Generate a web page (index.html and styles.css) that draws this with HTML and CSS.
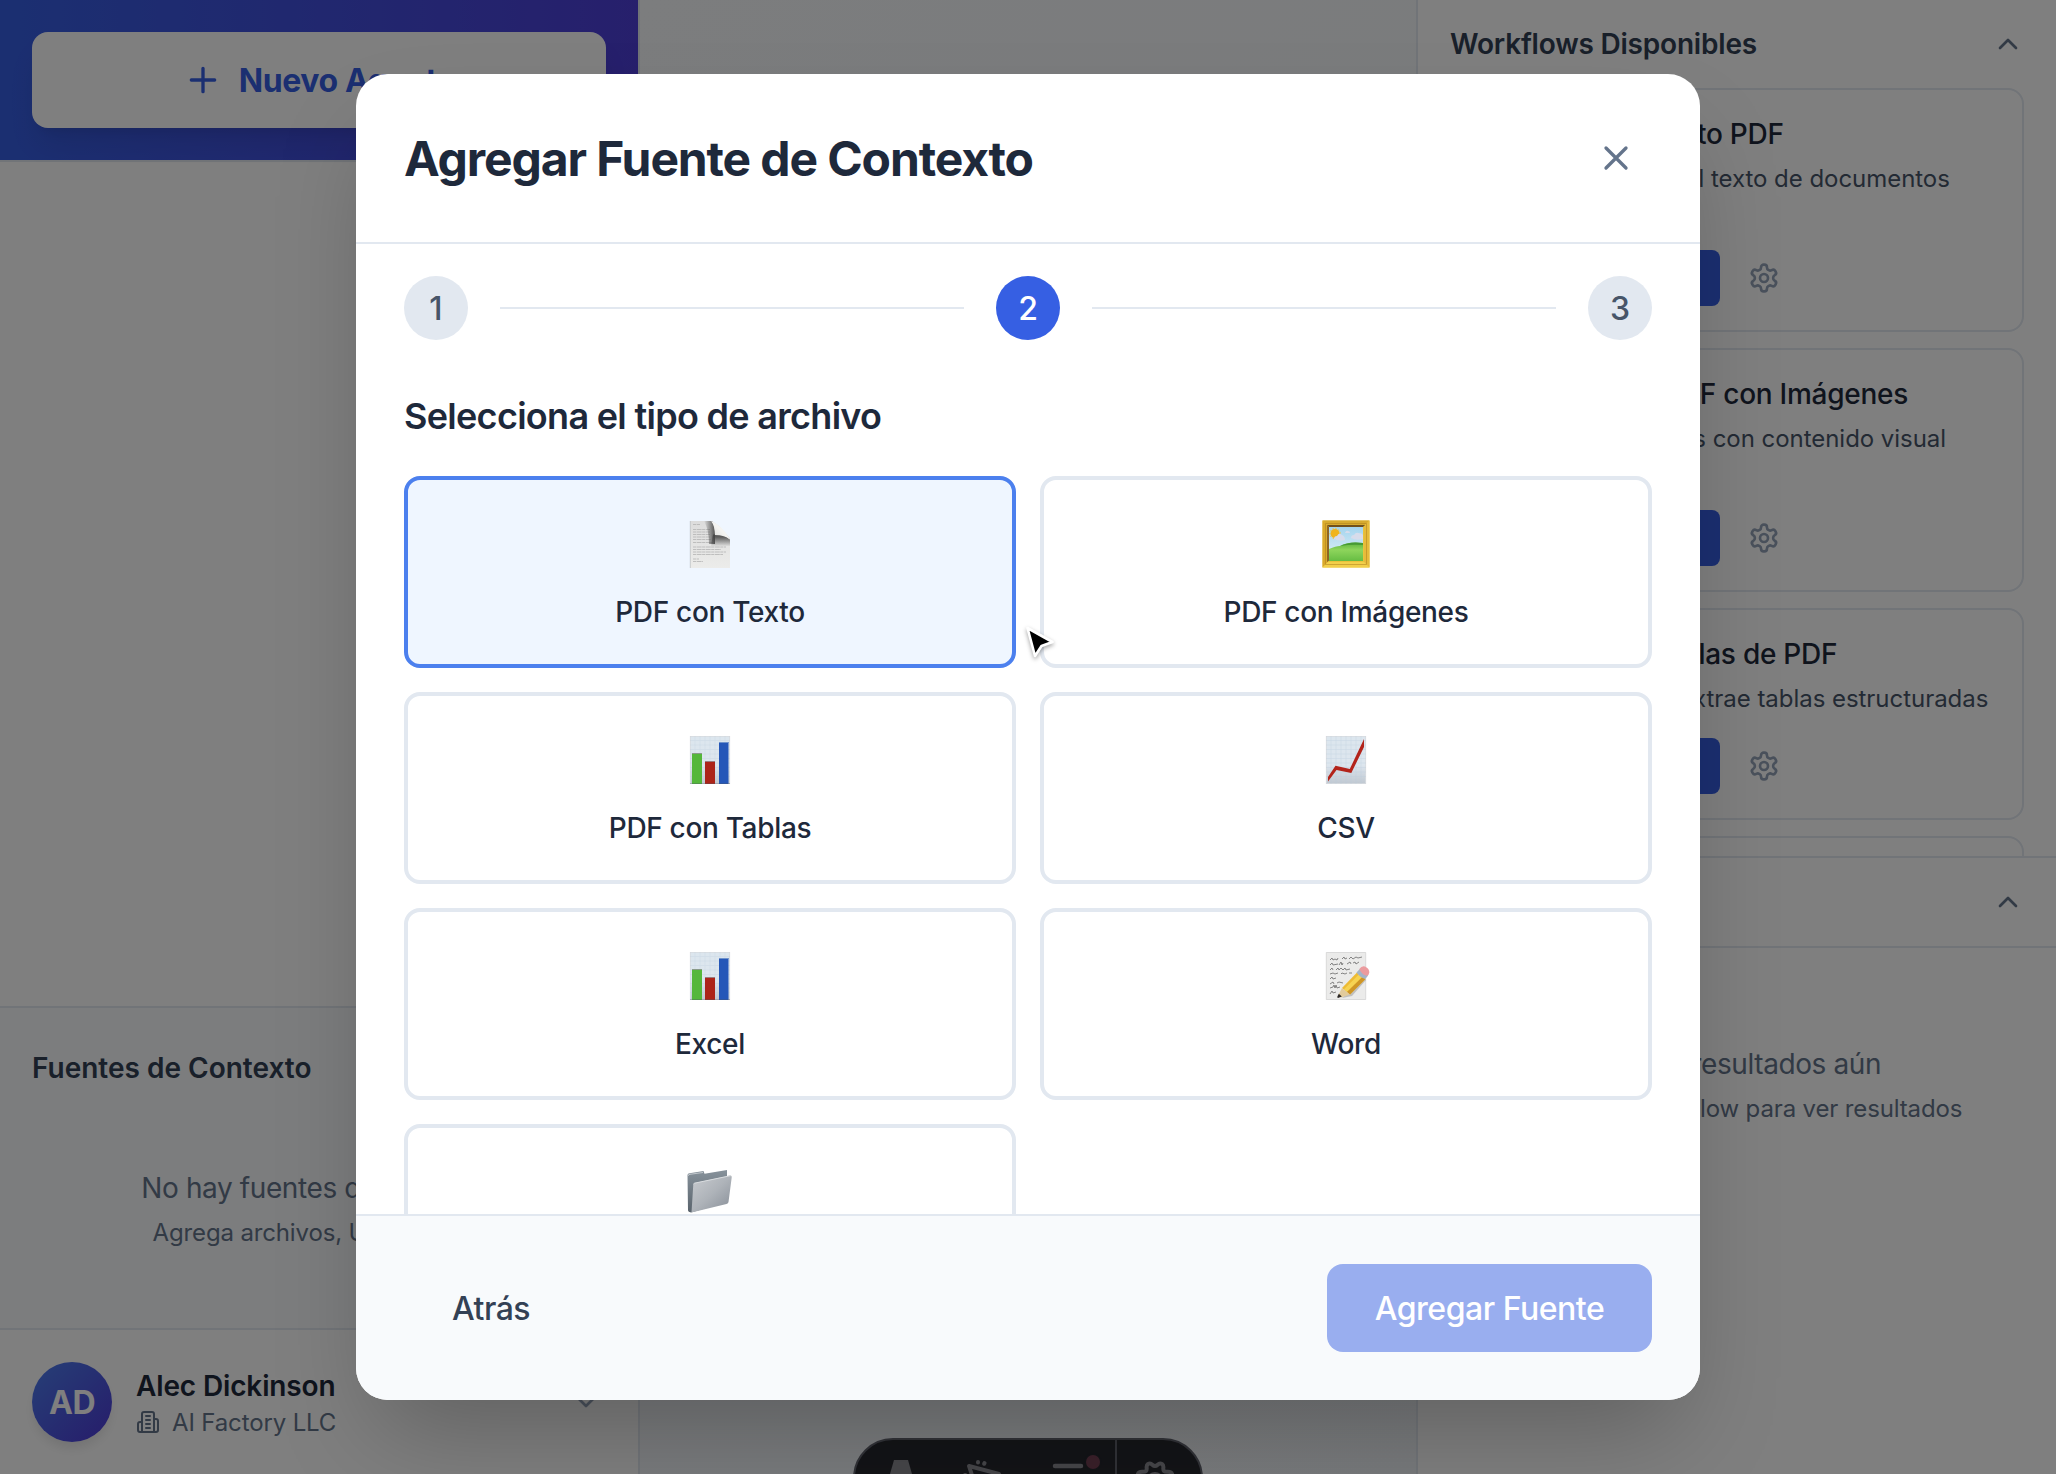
FILE: index.html
```html
<!DOCTYPE html>
<html lang="es">
<head>
<meta charset="utf-8">
<title>Agregar Fuente de Contexto</title>
<link rel="stylesheet" href="styles.css">
</head>
<body>
<svg class="defs" aria-hidden="true">
  <defs>
    <symbol id="i-gear" viewBox="0 0 24 24"><path d="M12.22 2h-.44a2 2 0 0 0-2 2v.18a2 2 0 0 1-1 1.73l-.43.25a2 2 0 0 1-2 0l-.15-.08a2 2 0 0 0-2.73.73l-.22.38a2 2 0 0 0 .73 2.73l.15.1a2 2 0 0 1 1 1.72v.51a2 2 0 0 1-1 1.74l-.15.09a2 2 0 0 0-.73 2.73l.22.38a2 2 0 0 0 2.73.73l.15-.08a2 2 0 0 1 2 0l.43.25a2 2 0 0 1 1 1.73V20a2 2 0 0 0 2 2h.44a2 2 0 0 0 2-2v-.18a2 2 0 0 1 1-1.73l.43-.25a2 2 0 0 1 2 0l.15.08a2 2 0 0 0 2.73-.73l.22-.39a2 2 0 0 0-.73-2.73l-.15-.08a2 2 0 0 1-1-1.74v-.5a2 2 0 0 1 1-1.74l.15-.09a2 2 0 0 0 .73-2.73l-.22-.38a2 2 0 0 0-2.73-.73l-.15.08a2 2 0 0 1-2 0l-.43-.25a2 2 0 0 1-1-1.73V4a2 2 0 0 0-2-2z"/><circle cx="12" cy="12" r="3"/></symbol>
    <symbol id="i-up" viewBox="0 0 24 24"><path d="m18 15-6-6-6 6"/></symbol>
    <symbol id="i-chart" viewBox="0 0 48 48">
      <rect x="4.300" y=".3" width="39.400" height="47.400" fill="url(#sheet)" stroke="#d3d7dc" stroke-width=".8"/>
      <path d="M4 4.500h40M4 9h40M4 13.500h40M4 18h40M4 22.500h40M4 27h40M4 31.500h40M4 36h40M4 40.500h40M9 0v48M14 0v48M19 0v48M24 0v48M29 0v48M34 0v48M39 0v48" stroke="#b9cbdc" stroke-width=".6" opacity=".4"/>
      <rect x="6" y="17" width="10" height="31" fill="#55b73b"/><rect x="6" y="17" width="10" height="1" fill="#8a9a88"/>
      <rect x="19" y="25" width="10" height="23" fill="#ac2419"/><rect x="19" y="25" width="10" height="1" fill="#9a7c80"/>
      <rect x="33" y="6" width="9.500" height="42" fill="#2557b8"/><rect x="33" y="6" width="9.500" height="1" fill="#6f93cc"/>
      <rect x="4" y="47" width="40" height="1" fill="#4b5563" opacity=".35"/>
    </symbol>
    <linearGradient id="sheet" x1="0" y1="0" x2="0" y2="1"><stop offset="0" stop-color="#dce6ee"/><stop offset=".6" stop-color="#dde6ee"/><stop offset="1" stop-color="#c0c8d1"/></linearGradient>
    <linearGradient id="shade-x" x1="0" y1="0" x2="1" y2="0"><stop offset="0" stop-color="#444" stop-opacity="0"/><stop offset="1" stop-color="#444" stop-opacity=".9"/></linearGradient>
    <linearGradient id="shade-y" x1="0" y1="1" x2="0" y2="0"><stop offset="0" stop-color="#444" stop-opacity="0"/><stop offset=".8" stop-color="#444" stop-opacity=".85"/></linearGradient>
    <linearGradient id="paper" x1="0" y1="0" x2="0" y2="1"><stop offset="0" stop-color="#dcdcdc"/><stop offset="1" stop-color="#ececea"/></linearGradient>
    <linearGradient id="fold" x1="0" y1="1" x2="1" y2="0"><stop offset=".1" stop-color="#dcdcda"/><stop offset=".5" stop-color="#f4f4f2"/></linearGradient>
    <linearGradient id="sky" x1="0" y1="0" x2="0" y2="1"><stop offset="0" stop-color="#a4d4ee"/><stop offset="1" stop-color="#e4f3f8"/></linearGradient>
    <linearGradient id="grass" x1="0" y1="0" x2="0" y2="1"><stop offset="0" stop-color="#58b13c"/><stop offset=".4" stop-color="#8ed55c"/><stop offset="1" stop-color="#66bd43"/></linearGradient>
    <linearGradient id="folder" x1="0" y1="0" x2="1" y2="1"><stop offset="0" stop-color="#c9ccd0"/><stop offset=".5" stop-color="#aeb3b9"/><stop offset="1" stop-color="#868d96"/></linearGradient>
    <linearGradient id="folderback" x1="0" y1="0" x2="0" y2="1"><stop offset="0" stop-color="#87929b"/><stop offset="1" stop-color="#59636c"/></linearGradient>
  </defs>
</svg>

<div class="app">
  <aside class="sidebar">
    <div class="sidebar-top">
      <button class="new-agent"><svg class="line ic40" viewBox="0 0 24 24"><path d="M5 12h14M12 5v14"/></svg><span>Nuevo Agente</span></button>
    </div>
    <div class="agents"></div>
    <section class="sources">
      <h3 class="panel-title">Fuentes de Contexto</h3>
      <div class="empty">
        <p class="empty-main">No hay fuentes de contexto</p>
        <p class="empty-sub">Agrega archivos, URLs o APIs</p>
      </div>
    </section>
    <div class="user">
      <div class="avatar">AD</div>
      <div class="user-info">
        <div class="user-name">Alec Dickinson</div>
        <div class="user-org"><svg class="line ic24" viewBox="0 0 24 24"><path d="M6 22V4a2 2 0 0 1 2-2h8a2 2 0 0 1 2 2v18Z"/><path d="M6 12H4a2 2 0 0 0-2 2v6a2 2 0 0 0 2 2h2M18 9h2a2 2 0 0 1 2 2v9a2 2 0 0 1-2 2h-2M10 6h4M10 10h4M10 14h4M10 18h4"/></svg><span>AI Factory LLC</span></div>
      </div>
      <svg class="line ic32 muted" viewBox="0 0 24 24"><path d="m6 9 6 6 6-6"/></svg>
    </div>
  </aside>

  <main class="stage"></main>

  <aside class="right">
    <section class="workflows">
      <header class="right-head"><h3 class="panel-title tight">Workflows Disponibles</h3><svg class="line ic32 slate"><use href="#i-up"/></svg></header>
      <div class="wf-list">
        <article class="wf"><div class="wf-name">Extraer Texto PDF</div><p class="wf-desc">Extrae todo el texto de documentos<br>PDF</p><div class="wf-actions"><button class="run">Ejecutar</button><svg class="line ic32 muted"><use href="#i-gear"/></svg></div></article>
        <article class="wf"><div class="wf-name">Procesa PDF con Imágenes</div><p class="wf-desc">Procesa PDFs con contenido visual<br>e imágenes</p><div class="wf-actions"><button class="run">Ejecutar</button><svg class="line ic32 muted"><use href="#i-gear"/></svg></div></article>
        <article class="wf"><div class="wf-name">Extraer Tablas de PDF</div><p class="wf-desc">Identifica y extrae tablas estructuradas</p><div class="wf-actions"><button class="run">Ejecutar</button><svg class="line ic32 muted"><use href="#i-gear"/></svg></div></article>
        <article class="wf"><div class="wf-name">Procesar CSV</div></article>
      </div>
    </section>
    <section class="results">
      <header class="results-head"><h3 class="panel-title">Resultados</h3><svg class="line ic32 slate"><use href="#i-up"/></svg></header>
      <div class="empty results-empty">
        <p class="empty-main">No hay resultados aún</p>
        <p class="empty-sub">Ejecuta un workflow para ver resultados</p>
      </div>
    </section>
  </aside>
</div>

<div class="toolbar">
  <svg viewBox="0 0 350 80" width="350" height="80">
    <path d="M39 20h14l12 42H27z" fill="#8c8c92"/>
    <g fill="none" stroke="#8c8c92" stroke-width="4" stroke-linecap="round" stroke-linejoin="round"><path d="M144 34 114 26l9 28M123 22v.6M129.500 23l-.3.8M110 35h.3"/></g>
    <path d="M200 26h26M200 38h14M226 38h1" stroke="#8c8c92" stroke-width="4.500" stroke-linecap="round"/>
    <circle cx="238" cy="22" r="9" fill="#26282f"/><circle cx="238" cy="22" r="7" fill="#754055"/>
    <path d="M261 0v80" stroke="#62646f" stroke-width="2"/>
    <g transform="translate(281 20)" fill="none" stroke="#8c8c92" stroke-width="4" stroke-linejoin="round"><path d="M19 6c3 0 3-4 7-2 3 2 0 5 2 7s7-1 8 3c1 3-3 4-3 8M19 6c-3 0-3-4-7-2-3 2 0 5-2 7s-7-1-8 3c-1 3 3 4 3 8"/><circle cx="19" cy="21" r="7"/></g>
  </svg>
</div>

<div class="overlay">
  <div class="modal">
    <header class="modal-head">
      <h2>Agregar Fuente de Contexto</h2>
      <button class="close" aria-label="Cerrar"><svg class="line ic40" viewBox="0 0 24 24"><path d="M18 6 6 18M6 6l12 12"/></svg></button>
    </header>
    <div class="steps">
      <span class="step">1</span><i></i><span class="step active">2</span><i></i><span class="step">3</span>
    </div>
    <div class="modal-body">
      <h3>Selecciona el tipo de archivo</h3>
      <div class="types">
        <div class="type selected">
          <svg class="emoji" viewBox="0 0 48 48">
            <path d="M4 1h22l7 5 11 12v30H4z" fill="url(#paper)"/><path d="M4.300 48V1" stroke="#bfc3c7" stroke-width=".8"/>
            <g stroke="#b4b4b4" stroke-width=".8" stroke-dasharray="3 .6 5 .5"><path d="M7 4.500h7M7 9.500h17M7 12h17M7 14.500h17M7 17h17M7 19.500h18M7 22.500h20M7 27h33M7 29.500h28M7 32h33M7 34.500h30M7 39h6M7 41.500h10"/></g>
            <path d="M18 1h8q3 4 3 14v9h-6q0-14-5-23z" fill="url(#shade-x)"/>
            <path d="M27 14.500h10l7 5v7H25z" fill="url(#shade-y)"/>
            <path d="M25 1q12 5 19 18.500-5-4.500-15-4.500 0-9-4-14z" fill="url(#fold)"/>
          </svg>
          <span>PDF con Texto</span>
        </div>
        <div class="type">
          <svg class="emoji" viewBox="0 0 48 48">
            <path d="M.5.500h47v47H.5z" fill="#eac23a"/>
            <path d="M.5.500h47L42 6H6z" fill="#d6aa2f"/><path d="M.5.500v47L6 42V6z" fill="#d9a92b"/><path d="M47.500.500v47L42 42V6z" fill="#e6bb3b"/><path d="M.5 47.500h47L42 42H6z" fill="#f2cf4a"/>
            <path d="M3.500 3.500h41v41h-41z" fill="none" stroke="#a97b1c" stroke-width="1" opacity=".5"/>
            <path d="M5 5h38l-3 3H8z" fill="#70501c"/><path d="M5 5v37l3-2V8z" fill="#8d6625"/>
            <path d="M7 7h34v34H7z" fill="url(#sky)"/>
            <circle cx="13" cy="13.500" r="4.500" fill="#f0b41c"/><circle cx="13" cy="13.500" r="5.200" fill="none" stroke="#f5c842" stroke-dasharray="1.500 1.500"/>
            <path d="M12 19q0-3 3-3 2-4 5-1 3 1 3 5-5 2-11-1zM29 18q0-3 3-3 2-3 4-2 4 0 5 2v4q-7 2-12-1zM23 13q1-3 3-2 2 0 2 2z" fill="#d7dceb"/>
            <path d="M7 29q7-3 11-3 8-5 23-3v18H7z" fill="url(#grass)"/><path d="M18 26q10-5 23-3v2q-12-1-23 1z" fill="#479a35"/>
          </svg>
          <span>PDF con Imágenes</span>
        </div>
        <div class="type"><svg class="emoji"><use href="#i-chart"/></svg><span>PDF con Tablas</span></div>
        <div class="type">
          <svg class="emoji" viewBox="0 0 48 48">
            <rect x="4.300" y=".3" width="39.400" height="47.400" fill="url(#sheet)" stroke="#d3d7dc" stroke-width=".8"/>
            <path d="M4 4.500h40M4 9h40M4 13.500h40M4 18h40M4 22.500h40M4 27h40M4 31.500h40M4 36h40M4 40.500h40M9 0v48M14 0v48M19 0v48M24 0v48M29 0v48M34 0v48M39 0v48" stroke="#b9cbdc" stroke-width=".6" opacity=".5"/>
            <path d="M6 41v4.500l8.500-11.500 14.800 3L42 11V3L27.800 33l-14.300-3.200z" fill="#b3241b"/>
          </svg>
          <span>CSV</span>
        </div>
        <div class="type"><svg class="emoji"><use href="#i-chart"/></svg><span>Excel</span></div>
        <div class="type">
          <svg class="emoji" viewBox="0 0 48 48">
            <path d="M4.300.5h39.400v47H4.300z" fill="#ebebea" stroke="#cfcfcf" stroke-width=".7"/>
            <path d="m8 8 2-2 1 2 2-1 2 1 1-2m4 1 2-2 1 2 2-1m2 1 2-2 2 2 3-2 2 1 4-1M8 13l2-2 1 2 5-1m1 1 2-3 1 3 1-2m4 1 3-2 1 2m2-1 2-1 1 2 3-2M8 18l2-2 1 2m3 0 2-2 1 2 2-2 2 2 2-2 1 2 4-1M8 22l3-1 2 1 3-1m3 1 1-1 3 1 2-1m2 0h3M8 27l2-2 1 2 3-1M8 32l3-2 1 2m3-1 2-1 4 1M8 36l3-1 1-2 1 3 1-3 1 3 3-1M8 42l2-3 1 2 3-1" stroke="#6a6a6a" stroke-width=".8" fill="none"/>
            <path d="m20 46 10-2 14-16-3-3z" fill="#8c8c8c" opacity=".45"/>
            <path d="M35 20.500 43.500 27 28 42.500 20 36z" fill="#edbb35"/><path d="m37 22.200 3.600 2.600L25 40l-3.300-2.600z" fill="#f6d352"/><path d="m40.600 24.800 2.900 2.200L28 42.500 25 40z" fill="#cf9626"/>
            <path d="m20 36 8 6.500-9 3-3-1.700z" fill="#e2cb9c"/><path d="m16.800 41.800 3 2.800-3.800 1.400q-1-.5-.6-1.600z" fill="#2b2725"/>
            <path d="m34.500 20.500 3.200-3.500 8.500 6.500-3 3.500q-5-1.500-8.700-6.500z" fill="#a3b4c8"/><path d="M37.300 17q2.500-3.500 5.700-2.500 4.500 2 4.300 6-.3 3-2.600 3.300-5.200-1.300-7.400-6.800z" fill="#eb9b9e"/>
          </svg>
          <span>Word</span>
        </div>
        <div class="type">
          <svg class="emoji" viewBox="0 0 48 48">
            <path d="M1.500 7q0-1.500 2-1.700L17.500 3l1 2.800L41 2v32L5 44.500q-3-.5-3-2z" fill="url(#folderback)"/>
            <path d="M2 8q0-1.500 2-1.700L17 4.500" stroke="#c2c8cd" fill="none"/>
            <path d="M8.500 15 44 7.500q2-.3 1.700 2L42.500 34q-.2 1.500-2 2L5.500 44.500 7.300 16.300q.2-1 1.200-1.300z" fill="url(#folder)"/>
            <path d="m7.500 16 1-.8L45 7.600" stroke="#d9dcdf" fill="none"/>
          </svg>
        </div>
      </div>
    </div>
    <footer class="modal-foot">
      <button class="back">Atrás</button>
      <button class="submit" disabled>Agregar Fuente</button>
    </footer>
  </div>
</div>

<svg class="cursor" viewBox="0 0 32 36" width="32" height="36"><path d="M2.500 3 27.500 17 16.500 21 10 31z" fill="#000" stroke="#fff" stroke-width="2.600" stroke-linejoin="round"/></svg>
</body>
</html>
```
FILE: styles.css
```css
* { box-sizing: border-box; }
body {
  margin: 0;
  width: 2056px;
  height: 1474px;
  overflow: hidden;
  position: relative;
  font-family: Inter, "Liberation Sans", sans-serif;
  color: #1e293b;
  background: #fff;
}
h2, h3, p { margin: 0; }
button { font: inherit; letter-spacing: inherit; border: 0; background: none; padding: 0; }
.defs { position: absolute; width: 0; height: 0; }
.line { fill: none; stroke: currentColor; stroke-width: 2; stroke-linecap: round; stroke-linejoin: round; flex: none; display: block; }
.ic24 { width: 24px; height: 24px; }
.ic32 { width: 32px; height: 32px; }
.ic40 { width: 40px; height: 40px; }
.muted { color: #94a3b8; }
.slate { color: #64748b; }

.app { display: flex; width: 100%; height: 100%; }

/* left sidebar */
.sidebar { width: 640px; flex: none; display: flex; flex-direction: column; border-right: 2px solid #e2e8f0; background: #fff; }
.sidebar-top { height: 162px; padding: 32px; border-bottom: 2px solid #e2e8f0; background: linear-gradient(90deg, #365fe3, #4e3fd9) padding-box; }
.new-agent {
  width: 100%; height: 96px; border-radius: 16px; background: #fff; color: #365fe3;
  display: flex; align-items: center; justify-content: center; gap: 16px;
  font-size: 32px; font-weight: 650; letter-spacing: -.4px;
  box-shadow: 0 20px 30px -6px rgba(0,0,0,.1), 0 8px 12px -8px rgba(0,0,0,.1);
}
.agents { flex: 1; }
.sources { height: 324px; border-top: 2px solid #e2e8f0; border-bottom: 2px solid #e2e8f0; background: #f8fafc; padding: 40px 32px 0; }
.panel-title { font-size: 28px; line-height: 40px; font-weight: 600; color: #334155; white-space: nowrap; }
.panel-title.tight { letter-spacing: -.2px; }
.empty { text-align: center; color: #64748b; padding-top: 80px; white-space: nowrap; }
.empty-main { font-size: 28px; line-height: 40px; letter-spacing: -.4px; }
.empty-sub { font-size: 24px; line-height: 32px; margin-top: 9px; letter-spacing: -.14px; }
.user { height: 144px; padding: 0 36px 0 32px; display: flex; align-items: center; gap: 24px; }
.avatar {
  width: 80px; height: 80px; border-radius: 50%; color: #fff;
  background: linear-gradient(135deg, #4c7fee, #4e38d6);
  display: flex; align-items: center; justify-content: center;
  font-size: 32px; font-weight: 700; letter-spacing: -.5px;
  box-shadow: 0 8px 12px -2px rgba(0,0,0,.1);
}
.user-info { flex: 1; letter-spacing: -.14px; }
.user-name { font-size: 28px; line-height: 40px; font-weight: 600; }
.user-org { display: flex; align-items: center; gap: 12px; font-size: 24px; line-height: 32px; color: #64748b; }
.user-org span { padding-top: 1px; }

.stage { flex: 1; background: linear-gradient(135deg, #f8fafc, #f1f5f9); }

/* right panel */
.right { width: 640px; flex: none; border-left: 2px solid #e2e8f0; background: #fff; display: flex; flex-direction: column; }
.workflows { height: 856px; overflow: hidden; padding: 0 32px; }
.right-head, .results-head { display: flex; align-items: center; justify-content: space-between; }
.right-head { height: 88px; }
.wf-list { display: flex; flex-direction: column; gap: 16px; }
.wf { border: 2px solid #e2e8f0; border-radius: 16px; padding: 24px 24px 24px 96px; }
.wf-name { font-size: 28px; line-height: 40px; font-weight: 500; letter-spacing: -.26px; white-space: nowrap; }
.wf-desc { font-size: 24px; line-height: 32px; margin-top: 9px; color: #475569; letter-spacing: -.04px; white-space: nowrap; }
.wf-actions { display: flex; align-items: center; gap: 28px; margin-top: 23px; }
.run { width: 172px; height: 56px; border-radius: 8px; background: #365fe3; color: #fff; font-size: 24px; font-weight: 500; }
.results-head { height: 92px; padding: 0 32px; border-top: 2px solid #e2e8f0; border-bottom: 2px solid #e2e8f0; }
.results-empty { padding-top: 96px; }

/* developer toolbar */
.toolbar {
  position: absolute; left: 853px; top: 1438px; width: 350px; height: 80px;
  border-radius: 40px; background: #26282f; border: 2px solid #62646f; overflow: hidden;
}
.toolbar svg { display: block; }

/* modal */
.overlay { position: absolute; inset: 0; background: rgba(0,0,0,.5); display: flex; align-items: center; justify-content: center; }
.modal { width: 1344px; height: 1326px; border-radius: 32px; background: #fff; overflow: hidden; display: flex; flex-direction: column; box-shadow: 0 50px 100px -24px rgba(0,0,0,.25); }
.modal-head { height: 170px; flex: none; padding: 0 48px; display: flex; align-items: center; justify-content: space-between; border-bottom: 2px solid #e2e8f0; }
.modal-head h2 { font-size: 48px; line-height: 64px; font-weight: 700; letter-spacing: -1.12px; padding-top: 1px; white-space: nowrap; }
.close { padding: 16px; color: #64748b; }
.steps { height: 128px; flex: none; padding: 0 48px; display: flex; align-items: center; gap: 32px; }
.steps i { flex: 1; height: 2px; background: #e2e8f0; }
.step { width: 64px; height: 64px; border-radius: 50%; background: #e2e8f0; color: #475569; font-size: 32px; font-weight: 500; display: flex; align-items: center; justify-content: center; }
.step.active { background: #365fe3; color: #fff; }
.modal-body { flex: 1; min-height: 0; overflow: hidden; padding: 16px 48px 0; }
.modal-body h3 { font-size: 36px; line-height: 56px; font-weight: 600; letter-spacing: -.7px; margin-bottom: 32px; white-space: nowrap; }
.types { display: grid; grid-template-columns: 1fr 1fr; gap: 24px; }
.type { height: 192px; border: 4px solid #e2e8f0; border-radius: 16px; padding-top: 40px; display: flex; flex-direction: column; align-items: center; font-size: 28px; line-height: 40px; font-weight: 500; letter-spacing: -.32px; }
.type.selected { border-color: #4c80ee; background: #eff6ff; }
.emoji { width: 48px; height: 48px; display: block; margin-bottom: 24px; }
.modal-foot { height: 186px; flex: none; padding: 0 48px; border-top: 2px solid #e2e8f0; background: #f8fafc; display: flex; align-items: center; justify-content: space-between; font-size: 32px; font-weight: 500; letter-spacing: -.48px; }
.back { padding: 0 48px; color: #334155; }
.submit { width: 325px; height: 88px; border-radius: 16px; background: #99aeef; color: #fff; }

.cursor { position: absolute; left: 1025px; top: 625px; filter: drop-shadow(0 2px 2px rgba(0,0,0,.35)); }
```
